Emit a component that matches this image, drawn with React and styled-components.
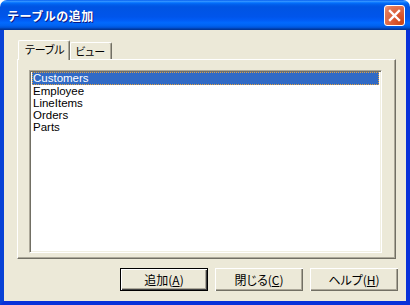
import React from "react";
import styled, { createGlobalStyle } from "styled-components";

const Global = createGlobalStyle`
  html, body { margin: 0; padding: 0; background: #ffffff; }
  body { width: 410px; height: 305px; overflow: hidden; }
`;

const Window = styled.div`
  width: 410px;
  height: 305px;
  display: flex;
  flex-direction: column;
  box-sizing: border-box;
  font-family: "Noto Sans CJK JP", sans-serif;
`;

const TitleBar = styled.div`
  height: 30px;
  flex: none;
  box-sizing: border-box;
  display: flex;
  align-items: center;
  justify-content: space-between;
  padding: 0 5px 0 7px;
  border-radius: 7px 7px 0 0;
  background: linear-gradient(
    to bottom,
    #0058ee 0%,
    #3593ff 4%,
    #288eff 6%,
    #127dff 8%,
    #036ffc 10%,
    #0262ee 14%,
    #0057e5 20%,
    #0054e3 24%,
    #0055eb 56%,
    #005bf5 66%,
    #026afe 76%,
    #0062ef 86%,
    #0052d6 92%,
    #0040ab 96%,
    #003092 100%
  );
`;

const Title = styled.span`
  color: #ffffff;
  font-family: "Noto Sans CJK JP", sans-serif;
  font-size: 12px;
  font-weight: 700;
  letter-spacing: 0.5px;
  text-shadow: 1px 1px 0 #0a1883;
  line-height: 1;
  padding-top: 1px;
`;

const CloseButton = styled.div`
  width: 21px;
  height: 21px;
  box-sizing: border-box;
  border: 1px solid #ffffff;
  border-radius: 3px;
  background: radial-gradient(circle at 85% 85%, #cc4616 0%, #d8562f 30%, #e37a58 80%, #f1a08a 100%);
  display: flex;
  align-items: center;
  justify-content: center;
  margin-top: 1px;
`;

const Body = styled.div`
  flex: 1;
  display: flex;
  flex-direction: column;
  background: #ece9d8;
  border-left: 4px solid #0842d6;
  border-right: 4px solid #0831d9;
  border-bottom: 4px solid #0831d9;
  padding: 10px 10px 0 13px;
  box-sizing: border-box;
`;

const TabStrip = styled.div`
  display: flex;
  align-items: flex-end;
  height: 19px;
  padding-left: 1px;
  position: relative;
  z-index: 1;
`;

const Tab = styled.div`
  box-sizing: border-box;
  height: ${(p) => (p.$active ? "20px" : "17px")};
  margin-bottom: ${(p) => (p.$active ? "-1px" : "0")};
  padding: ${(p) => (p.$active ? "0 5px 2px 6px" : "0 6px 0 4px")};
  background: #ece9d8;
  border-top: 1px solid #ffffff;
  border-left: 1px solid #ffffff;
  border-right: 1px solid #716f64;
  box-shadow: inset -1px 0 0 #aca899;
  border-radius: 2px 2px 0 0;
  font-family: "Noto Sans CJK JP", sans-serif;
  font-size: 11px;
  letter-spacing: -0.2px;
  font-feature-settings: "palt";
  color: #000;
  display: flex;
  align-items: center;
  line-height: 1;
`;

const Panel = styled.div`
  box-sizing: border-box;
  width: 379px;
  height: 200px;
  border-top: 1px solid #ffffff;
  border-left: 1px solid #ffffff;
  border-right: 1px solid #716f64;
  border-bottom: 1px solid #716f64;
  box-shadow: inset -1px -1px 0 #aca899;
  padding: 10px 13px 5px 11px;
  display: flex;
`;

const ListBox = styled.div`
  flex: 1;
  box-sizing: border-box;
  background: #ffffff;
  border-top: 1px solid #aca899;
  border-left: 1px solid #aca899;
  border-right: 1px solid #ffffff;
  border-bottom: 1px solid #ffffff;
  box-shadow: inset 1px 1px 0 #716f64, inset -1px -1px 0 #f1efe2;
  padding: 1px 2px;
  display: flex;
  flex-direction: column;
`;

const Item = styled.div`
  height: ${(p) => (p.$selected ? "13px" : "12px")};
  line-height: ${(p) => (p.$selected ? "13px" : "12px")};
  font-family: "Liberation Sans", Tahoma, sans-serif;
  font-size: 11.5px;
  padding-left: 1px;
  box-sizing: border-box;
  color: ${(p) => (p.$selected ? "#ffffff" : "#000000")};
  background: ${(p) => (p.$selected ? "#316ac5" : "transparent")};
  outline: ${(p) => (p.$selected ? "1px dotted #e0a040" : "none")};
  outline-offset: -1px;
`;

const ButtonRow = styled.div`
  display: flex;
  justify-content: flex-end;
  gap: 7px;
  margin-top: 9px;
  margin-right: -2px;
`;

const Button = styled.div`
  box-sizing: border-box;
  width: 88px;
  height: 23px;
  background: #ece9d8;
  border: ${(p) => (p.$default ? "1px solid #000000" : "none")};
  box-shadow: ${(p) =>
    p.$default
      ? "inset 1px 1px 0 #ffffff, inset -1px -1px 0 #404040, inset -2px -2px 0 #aca899"
      : "inset 1px 1px 0 #ffffff, inset -1px -1px 0 #716f64, inset -2px -2px 0 #aca899"};
  display: flex;
  align-items: center;
  justify-content: center;
  font-family: "Noto Sans CJK JP", sans-serif;
  font-size: 12px;
  font-feature-settings: "palt";
  color: #000;
  line-height: 1;
`;

const Accel = styled.span`
  text-decoration: underline;
  text-underline-offset: 1px;
`;

const items = ["Customers", "Employee", "LineItems", "Orders", "Parts"];

export default function App() {
  return (
    <>
      <Global />
      <Window>
        <TitleBar>
          <Title>テーブルの追加</Title>
          <CloseButton>
            <svg width="13" height="13" viewBox="0 0 13 13">
              <path d="M2 2 L11 11 M11 2 L2 11" stroke="#ffffff" strokeWidth="2.4" strokeLinecap="square" />
            </svg>
          </CloseButton>
        </TitleBar>
        <Body>
          <TabStrip>
            <Tab $active>テーブル</Tab>
            <Tab>ビュー</Tab>
          </TabStrip>
          <Panel>
            <ListBox>
              {items.map((it, i) => (
                <Item key={it} $selected={i === 0}>
                  {it}
                </Item>
              ))}
            </ListBox>
          </Panel>
          <ButtonRow>
            <Button $default>
              追加(<Accel>A</Accel>)
            </Button>
            <Button>
              閉じる(<Accel>C</Accel>)
            </Button>
            <Button>
              ヘルプ(<Accel>H</Accel>)
            </Button>
          </ButtonRow>
        </Body>
      </Window>
    </>
  );
}
